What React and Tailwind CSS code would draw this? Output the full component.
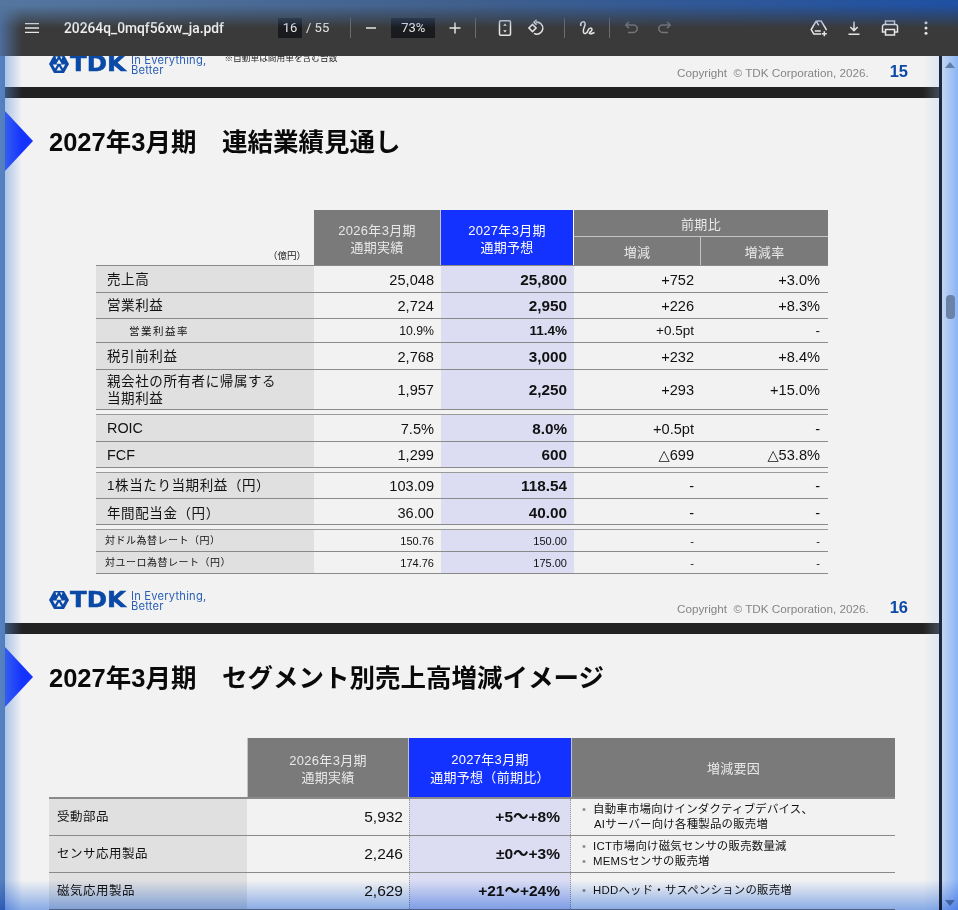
import React from "react";

const jp = "font-['Liberation_Sans','Noto_Sans_CJK_JP',sans-serif]";

const rows = [
  { label: "売上高", h: "h-[27px]", a: "25,048", b: "25,800", c: "+752", d: "+3.0%" },
  { label: "営業利益", h: "h-[26px]", a: "2,724", b: "2,950", c: "+226", d: "+8.3%" },
  { label: "営業利益率", h: "h-[24px]", a: "10.9%", b: "11.4%", c: "+0.5pt", d: "-", sub: true },
  { label: "税引前利益", h: "h-[27px]", a: "2,768", b: "3,000", c: "+232", d: "+8.4%" },
  { label: "親会社の所有者に帰属する\n当期利益", h: "h-[40px]", a: "1,957", b: "2,250", c: "+293", d: "+15.0%" },
  { gap: true },
  { label: "ROIC", h: "h-[27px]", a: "7.5%", b: "8.0%", c: "+0.5pt", d: "-", latin: true },
  { label: "FCF", h: "h-[26px]", a: "1,299", b: "600", c: "△699", d: "△53.8%", latin: true },
  { gap: true },
  { label: "1株当たり当期利益（円）", h: "h-[26px]", a: "103.09", b: "118.54", c: "-", d: "-" },
  { label: "年間配当金（円）", h: "h-[26px]", a: "36.00", b: "40.00", c: "-", d: "-", shifted: true },
  { gap: true },
  { label: "対ドル為替レート（円）", h: "h-[22px]", a: "150.76", b: "150.00", c: "-", d: "-", tiny: true },
  { label: "対ユーロ為替レート（円）", h: "h-[22px]", a: "174.76", b: "175.00", c: "-", d: "-", tiny: true },
];

const segments = [
  { label: "受動部品", a: "5,932", b: "+5〜+8%", notes: [["自動車市場向けインダクティブデバイス、", "AIサーバー向け各種製品の販売増"]] },
  { label: "センサ応用製品", a: "2,246", b: "±0〜+3%", notes: [["ICT市場向け磁気センサの販売数量減"], ["MEMSセンサの販売増"]] },
  { label: "磁気応用製品", a: "2,629", b: "+21〜+24%", notes: [["HDDヘッド・サスペンションの販売増"]] },
];

function Icon({ className, children, w = 20, fill = "none" }) {
  return (
    <svg viewBox="0 0 20 20" width={w} height={w} fill={fill} stroke={fill === "none" ? "currentColor" : "none"} strokeWidth="1.5" className={className}>
      {children}
    </svg>
  );
}

function Divider({ className }) {
  return <div className={`w-px h-5 bg-[#6d6d6d] ${className}`} />;
}

function Toolbar() {
  return (
    <div className="relative h-14 shrink-0 flex items-center bg-[#3a3a3a] text-[#e6e6e6] font-['Roboto',sans-serif]">
      <Icon className="ml-[22px]">
        <path d="M3 5.7h14M3 10h14M3 14.3h14" strokeWidth="1.3" />
      </Icon>
      <span className="ml-[22px] w-[161px] text-[13.8px] font-medium text-[#f1f1f1] whitespace-nowrap">20264q_0mqf56xw_ja.pdf</span>
      <div className="ml-[53px] w-6 h-5 bg-[#191b1f] flex items-center justify-center text-[13px]">16</div>
      <span className="ml-1 text-[13px] whitespace-nowrap">/ 55</span>
      <Divider className="ml-[21px]" />
      <Icon className="ml-[10px]" w={20}>
        <path d="M5 10h10" />
      </Icon>
      <div className="ml-[10px] w-11 h-5 bg-[#191b1f] flex items-center justify-center text-[13px]">73%</div>
      <Icon className="ml-[10px]" w={20}>
        <path d="M4.500 10h11M10 4.500v11" />
      </Icon>
      <Divider className="ml-[10px]" />
      <Icon className="ml-[19px]">
        <rect x="4.500" y="2.800" width="11" height="14.400" rx="1.200" />
        <path d="M10 5.500l1.800 2.200H8.200zM10 14.500l1.800-2.200H8.200z" fill="currentColor" stroke="none" />
      </Icon>
      <Icon className="ml-[11px]" w={20}>
        <path d="M6.500 6.400l3.600 3.600-3.600 3.600L2.900 10z" />
        <path d="M10 4.200a6 6 0 1 1-2 11.200" />
        <path d="M10.600 1.800L8 4.200l2.600 2.400" />
      </Icon>
      <Divider className="ml-[18px]" />
      <Icon className="ml-[12px]">
        <path d="M4 8C2.500 4.500 7 2 8 5c1 3-3 6-1.500 9.500 1 2 3.500 1 4.500-2 1-3 4-3 4-1s-3.500 3-2.500 4c1 1 3.500-.5 5-1" />
      </Icon>
      <Divider className="ml-[12px]" />
      <Icon className="ml-[12px] text-[#767676]">
        <path d="M7 3.800L3.800 7 7 10.200" />
        <path d="M4 7h7.500a3.700 3.700 0 0 1 0 7.400H6" />
      </Icon>
      <Icon className="ml-[12px] text-[#767676]">
        <path d="M13 3.800L16.200 7 13 10.200" />
        <path d="M16 7H8.500a3.700 3.700 0 0 0 0 7.400H14" />
      </Icon>
      <Icon className="ml-auto" w={20}>
        <path d="M7.200 3h5l5 8.300-.1 1M7.200 3L2.200 11.600l2.600 4.400h7.400M7.200 3l2.500 4.400M5.800 13h6" />
        <path d="M15.300 13.300v5M12.800 15.800h5" />
      </Icon>
      <Icon className="ml-[15px]">
        <path d="M10 3.500v9M6.300 9l3.700 3.600L13.700 9M4.500 16.300h11" />
      </Icon>
      <Icon className="ml-[16px]" w={20}>
        <path d="M5.500 6.500V3h9v3.500M5.500 14H2.500V8.500a2 2 0 0 1 2-2h11a2 2 0 0 1 2 2V14h-3M5.500 11.500h9V17h-9z" />
      </Icon>
      <Icon className="ml-[16px] mr-[22px]" fill="currentColor" w={20}>
        <circle cx="10" cy="4.800" r="1.500" />
        <circle cx="10" cy="10" r="1.500" />
        <circle cx="10" cy="15.200" r="1.500" />
      </Icon>
    </div>
  );
}

function Logo() {
  return (
    <div className="self-start h-[18px] flex items-center text-[#0b49a6]">
      <svg viewBox="0 0 20 18" width="20" height="18" className="shrink-0">
        <path d="M5 0h10l5 9-5 9H5L0 9z" fill="currentColor" />
        <path d="M10 4.200l2.600 4.500H7.400zM3.800 9.600h4.600l-2.300 4zM11.600 9.600h4.600l-2.300 4zM6.500 1.500h2.500L7.400 4.400zM13.500 1.500H11l1.600 2.900zM7.500 15.500l2.500-4.300 2.500 4.300z" fill="#f2f2f2" />
      </svg>
      <span className="ml-[1px] w-[60px] origin-left scale-x-[1.11] font-['DejaVu_Sans',sans-serif] font-bold text-[22px] leading-none [-webkit-text-stroke:0.5px_#0b49a6]">TDK</span>
      <div className="ml-[1px] pt-[1px] font-['Inter',sans-serif] text-[11.2px] leading-[10px] tracking-[0.2px] text-[#2a5fb5] whitespace-nowrap">
        <div>In Everything,</div>
        <div>Better</div>
      </div>
    </div>
  );
}

function Footer({ num, note }) {
  return (
    <div className="h-[32px] shrink-0 flex pl-[44px] pr-[31px]">
      <Logo />
      {note && <span className={`ml-[18px] -mt-[3px] text-[8.7px] leading-[13px] text-[#222] ${jp}`}>{note}</span>}
      <div className="ml-auto self-end flex items-center pb-[3px]">
        <span className="font-['Liberation_Sans',sans-serif] text-[11.7px] text-[#858585] whitespace-pre">Copyright  © TDK Corporation, 2026.</span>
        <span className="ml-[21px] mb-[5px] font-['Liberation_Sans',sans-serif] font-bold text-[16.5px] leading-none text-[#0b49a6]">{num}</span>
      </div>
    </div>
  );
}

function Title({ children }) {
  return (
    <div className="relative h-[112px] shrink-0 pl-[44px] pt-[26px]">
      <div className="absolute left-0 top-[13px] w-[28px] h-[60px] bg-[#1433ff] [clip-path:polygon(0_0,100%_50%,0_100%)]" />
      <h1 className={`text-[25.5px] leading-[36px] font-bold text-[#0a0a0a] whitespace-pre ${jp}`}>{children}</h1>
    </div>
  );
}

function HeadCell({ className = "", children }) {
  return (
    <div className={`flex items-center justify-center text-center pt-[2px] bg-[#7a7a7a] text-[#e8e8e8] text-[13px] leading-[17px] tracking-[0.3px] ${className}`}>
      {children}
    </div>
  );
}

function PerformanceTable() {
  return (
    <div className={`ml-[91px] w-[732px] ${jp}`}>
      <div className="grid grid-cols-[218px_127px_133px_254px] h-[55px]">
        <div className="flex items-end justify-end pr-[8px] pb-[2px] text-[9.5px] text-[#222]">（億円）</div>
        <HeadCell className="border-r border-[#c4c4c4]">
          <span>2026年3月期<br />通期実績</span>
        </HeadCell>
        <div className="flex items-center justify-center text-center pt-[2px] bg-[#1432ff] text-white text-[13px] leading-[17px] tracking-[0.3px] border-r border-white">
          <span>2027年3月期<br />通期予想</span>
        </div>
        <div className="flex flex-col">
          <HeadCell className="h-[27px] border-b border-[#c4c4c4]">前期比</HeadCell>
          <div className="flex-1 grid grid-cols-2">
            <HeadCell className="border-r border-[#c4c4c4]">増減</HeadCell>
            <HeadCell>増減率</HeadCell>
          </div>
        </div>
      </div>
      <div className="border-t border-[#8a8a8a]">
        {rows.map((r, i) =>
          r.gap ? (
            <div key={i} className="h-[5px] border-b border-[#9a9a9a]" />
          ) : (
            <Row key={i} r={r} />
          )
        )}
      </div>
    </div>
  );
}

function Row({ r }) {
  const numSize = r.tiny ? "text-[11px]" : r.sub ? "text-[12.3px]" : "text-[14.6px]";
  const boldSize = r.tiny ? "text-[11px]" : r.sub ? "text-[13.5px] font-bold" : "text-[15.3px] font-bold";
  const diffSize = r.tiny ? "text-[11px]" : r.sub ? "text-[13.5px]" : "text-[14.6px]";
  const labelSize = r.tiny
    ? "pl-[9px] text-[10px] tracking-[0.5px]"
    : r.sub
      ? "pl-[33px] text-[10.5px] tracking-[1.5px]"
      : r.latin
        ? "pl-[11px] text-[14.4px]"
        : "pl-[11px] text-[13.5px] leading-[17px] tracking-[0.6px]";
  const cellTop = r.shifted ? "pt-[3px]" : r.tiny ? "" : "pt-[1px]";
  const triangle = r.b === "600" ? "font-['Liberation_Sans','DejaVu_Sans',sans-serif]" : "";
  return (
    <div className={`grid grid-cols-[218px_127px_133px_127px_127px] leading-[18px] border-b border-[#8a8a8a] text-[#111] ${r.h}`}>
      <div className={`bg-[#e0e0e0] flex items-center whitespace-pre-line ${r.shifted ? "pt-[3px]" : ""} ${labelSize}`}>{r.label}</div>
      <div className={`flex items-center justify-end pr-[7px] ${cellTop} ${numSize}`}>{r.a}</div>
      <div className={`bg-[#dcddf3] flex items-center justify-end pr-[7px] ${cellTop} ${boldSize}`}>{r.b}</div>
      <div className={`flex items-center justify-end pr-[7px] ${cellTop} ${diffSize} ${triangle}`}>{r.c}</div>
      <div className={`flex items-center justify-end pr-[8px] ${cellTop} ${diffSize} ${triangle}`}>{r.d}</div>
    </div>
  );
}

function SegmentTable() {
  return (
    <div className={`ml-[44px] w-[846px] ${jp}`}>
      <div className="grid grid-cols-[198px_162px_162px_324px] h-[59px]">
        <div />
        <HeadCell className="border-x border-[#c4c4c4]">
          <span>2026年3月期<br />通期実績</span>
        </HeadCell>
        <div className="flex items-center justify-center text-center pt-[2px] bg-[#1432ff] text-white text-[13px] leading-[18px] tracking-[0.3px]">
          <span>2027年3月期<br />通期予想（前期比）</span>
        </div>
        <HeadCell className="border-l border-[#c4c4c4]">増減要因</HeadCell>
      </div>
      <div className="border-t-2 border-[#8a8a8a]">
        {segments.map((s) => (
          <div key={s.label} className="grid grid-cols-[198px_162px_162px_324px] h-[37px] border-b border-[#8a8a8a] text-[#111]">
            <div className="bg-[#e0e0e0] flex items-center pl-[8px] text-[12.5px] tracking-[0.5px]">{s.label}</div>
            <div className="flex items-center justify-end pr-[6px] text-[15.5px]">{s.a}</div>
            <div className="bg-[#dcddf3] flex items-center justify-end pr-[10px] text-[15.5px] font-bold border-x border-dotted border-[#9a9a9a]">{s.b}</div>
            <div className="flex flex-col justify-center pl-[11px] text-[11.4px] leading-[15.5px] tracking-[0.25px]">
              {s.notes.map((n) => (
                <div key={n[0]} className="flex">
                  <span className="w-[11px] text-[#8a8a8a]">•</span>
                  <span>
                    {n.map((line, i) => (
                      <div key={line} className={i > 0 ? "pl-[1px]" : ""}>{line}</div>
                    ))}
                  </span>
                </div>
              ))}
            </div>
          </div>
        ))}
      </div>
    </div>
  );
}

export default function App() {
  return (
    <div className="relative w-[958px] h-[910px] overflow-hidden flex flex-col bg-[#222222]">
      <Toolbar />
      <div className="flex-1 min-h-0 flex">
        <div className="w-[5px] shrink-0 bg-[#4c6f9c]" />
        <div className="w-[934px] shrink-0 flex flex-col gap-[11px]">
          <section className="h-[31px] shrink-0 bg-[#f2f2f2] overflow-hidden flex flex-col justify-end">
            <Footer num="15" note="※自動車は商用車を含む台数" />
          </section>
          <section className="h-[525px] shrink-0 bg-[#f2f2f2] flex flex-col">
            <Title>2027年3月期　連結業績見通し</Title>
            <PerformanceTable />
            <div className="mt-auto">
              <Footer num="16" />
            </div>
          </section>
          <section className="flex-1 bg-[#f2f2f2] flex flex-col">
            <Title>
              2027年3月期　セグメント別売上高増減イメージ
            </Title>
            <div className="-mt-[8px]">
              <SegmentTable />
            </div>
          </section>
        </div>
        <div className="w-[3px] shrink-0 bg-[#1b2a40]" />
        <div className="flex-1 flex flex-col items-center bg-gradient-to-r from-[#c4d6f0] to-[#8ab4f5] pt-[6px] pb-[4px]">
          <div className="w-0 h-0 border-x-[5px] border-x-transparent border-b-[6px] border-b-[#5f7ea8]" />
          <div className="mt-[227px] w-[9px] h-[24px] rounded-[4px] bg-[#6b83a8]" />
          <div className="mt-auto w-0 h-0 border-x-[5px] border-x-transparent border-t-[6px] border-t-[#5f7ea8]" />
        </div>
      </div>
      <div className="absolute inset-y-0 left-0 w-[22px] pointer-events-none bg-gradient-to-r from-[#5a8fdc]/60 to-transparent" />
      <div className="absolute top-[56px] bottom-0 right-[19px] w-[16px] pointer-events-none bg-gradient-to-l from-[#a8c4ee]/25 to-transparent" />
      <div className="absolute top-0 inset-x-0 h-[28px] pointer-events-none bg-[linear-gradient(to_right,#54769f,#3f5f8c_50%,#1f50a2)] [mask-image:linear-gradient(to_bottom,black_20%,transparent)]" />
      <div className="absolute bottom-0 inset-x-0 h-[30px] pointer-events-none mix-blend-multiply bg-gradient-to-t from-[#8fb4f2] to-transparent" />
    </div>
  );
}
